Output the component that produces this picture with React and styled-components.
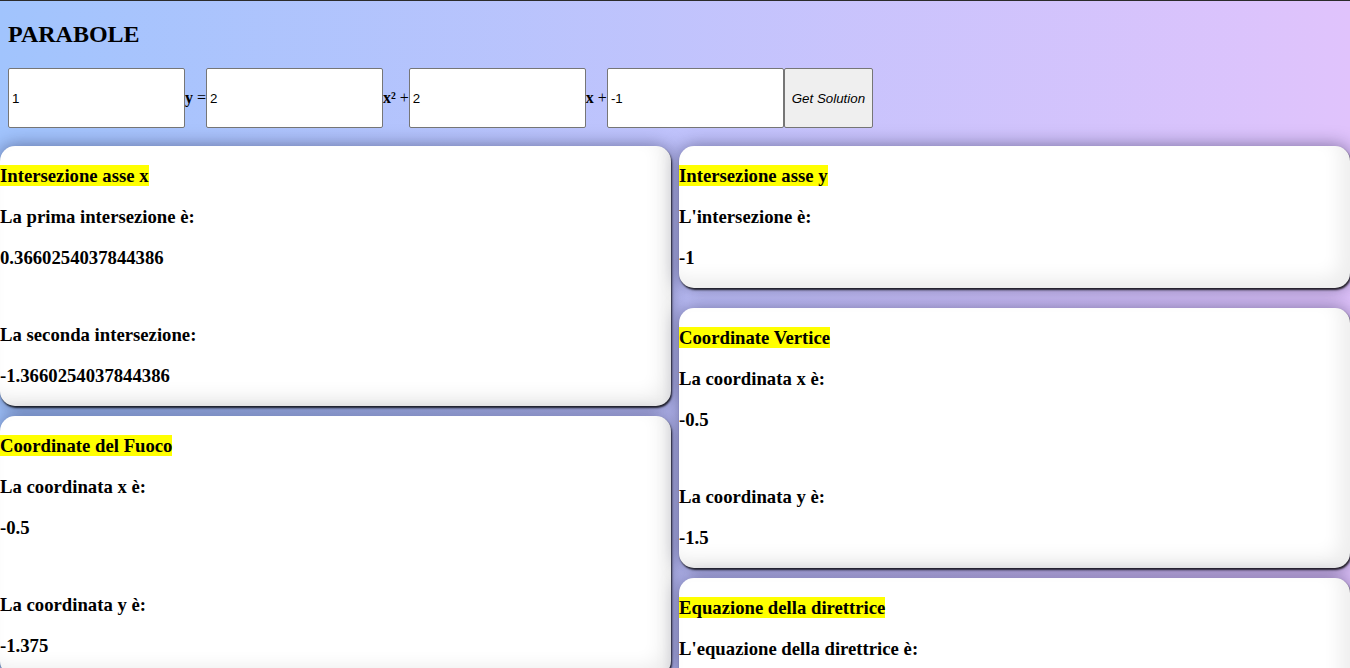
import styled, { createGlobalStyle } from "styled-components";

const GlobalStyle = createGlobalStyle`
	html, body {
		margin: 0;
		padding: 0;
	}
	body {
		min-height: 100vh;
		border-top: 1px solid #2b2b2b;
		font-family: "Liberation Serif", "Times New Roman", serif;
		font-size: 16px;
		color: #000;
		background: linear-gradient(to right, #a1c4fd, #e0c3fc);
	}
`;

const Header = styled.div`
	padding: 0 8px;
`;

const Title = styled.h2`
	font-size: 24px;
	font-weight: 700;
	margin: 20px 0;
`;

const EquationRow = styled.div`
	display: flex;
	align-items: center;
	height: 60px;
	margin-bottom: 18px;
`;

const NumberInput = styled.input`
	box-sizing: border-box;
	width: 177px;
	height: 60px;
	padding: 1px 3px;
	border: 1px solid #767676;
	border-radius: 2px;
	background: #fff;
	font-family: "Liberation Sans", Arial, sans-serif;
	font-size: 13.33px;
	color: #000;
	outline: none;
`;

const Term = styled.span`
	white-space: pre;
	b {
		font-weight: 700;
	}
`;

const SolveButton = styled.button`
	box-sizing: border-box;
	width: 89px;
	height: 60px;
	border: 1px solid #767676;
	border-radius: 2px;
	background: #efefef;
	font-family: "Liberation Sans", Arial, sans-serif;
	font-size: 13.33px;
	font-style: italic;
	color: #000;
	padding: 1px 6px;
	cursor: pointer;
`;

const Board = styled.div`
	display: grid;
	grid-template-columns: 1fr 1fr;
	column-gap: 8px;
	align-items: start;
`;

const Column = styled.div`
	display: flex;
	flex-direction: column;
`;

const Card = styled.div`
	background: #fff;
	padding: 0.5px 0;
	border-radius: 15px;
	margin-bottom: ${(p) => p.$space || 10}px;
	box-shadow:
		1px 2px 2px rgba(0, 0, 0, 0.8),
		0 0 18px rgba(20, 20, 60, 0.5),
		inset -10px -10px 18px rgba(0, 0, 0, 0.07);
`;

const Line = styled.h3`
	font-size: 18.72px;
	font-weight: 700;
	margin: 18.72px 0;
`;

const Highlight = styled.span`
	background: #ffff00;
`;

function ResultCard({ title, lines, space }) {
	return (
		<Card $space={space}>
			<Line>
				<Highlight>{title}</Highlight>
			</Line>
			{lines.map((group, i) => (
				<div key={i}>
					{i > 0 && <br />}
					<Line>{group[0]}</Line>
					<Line>{group[1]}</Line>
				</div>
			))}
		</Card>
	);
}

export default function App() {
	return (
		<>
			<GlobalStyle />
			<Header>
				<Title>PARABOLE</Title>
				<EquationRow>
					<NumberInput type="text" defaultValue="1" />
					<Term>
						<b>y</b> =
					</Term>
					<NumberInput type="text" defaultValue="2" />
					<Term>
						<b>x²</b> +
					</Term>
					<NumberInput type="text" defaultValue="2" />
					<Term>
						<b>x</b> +
					</Term>
					<NumberInput type="text" defaultValue="-1" />
					<SolveButton>Get Solution</SolveButton>
				</EquationRow>
			</Header>
			<Board>
				<Column>
					<ResultCard
						title="Intersezione asse x"
						lines={[
							["La prima intersezione è:", "0.3660254037844386"],
							["La seconda intersezione:", "-1.3660254037844386"],
						]}
					/>
					<ResultCard
						title="Coordinate del Fuoco"
						lines={[
							["La coordinata x è:", "-0.5"],
							["La coordinata y è:", "-1.375"],
						]}
					/>
				</Column>
				<Column>
					<ResultCard
						title="Intersezione asse y"
						space={20}
						lines={[["L'intersezione è:", "-1"]]}
					/>
					<ResultCard
						title="Coordinate Vertice"
						lines={[
							["La coordinata x è:", "-0.5"],
							["La coordinata y è:", "-1.5"],
						]}
					/>
					<ResultCard
						title="Equazione della direttrice"
						lines={[["L'equazione della direttrice è:", "y = -1.625"]]}
					/>
				</Column>
			</Board>
		</>
	);
}
